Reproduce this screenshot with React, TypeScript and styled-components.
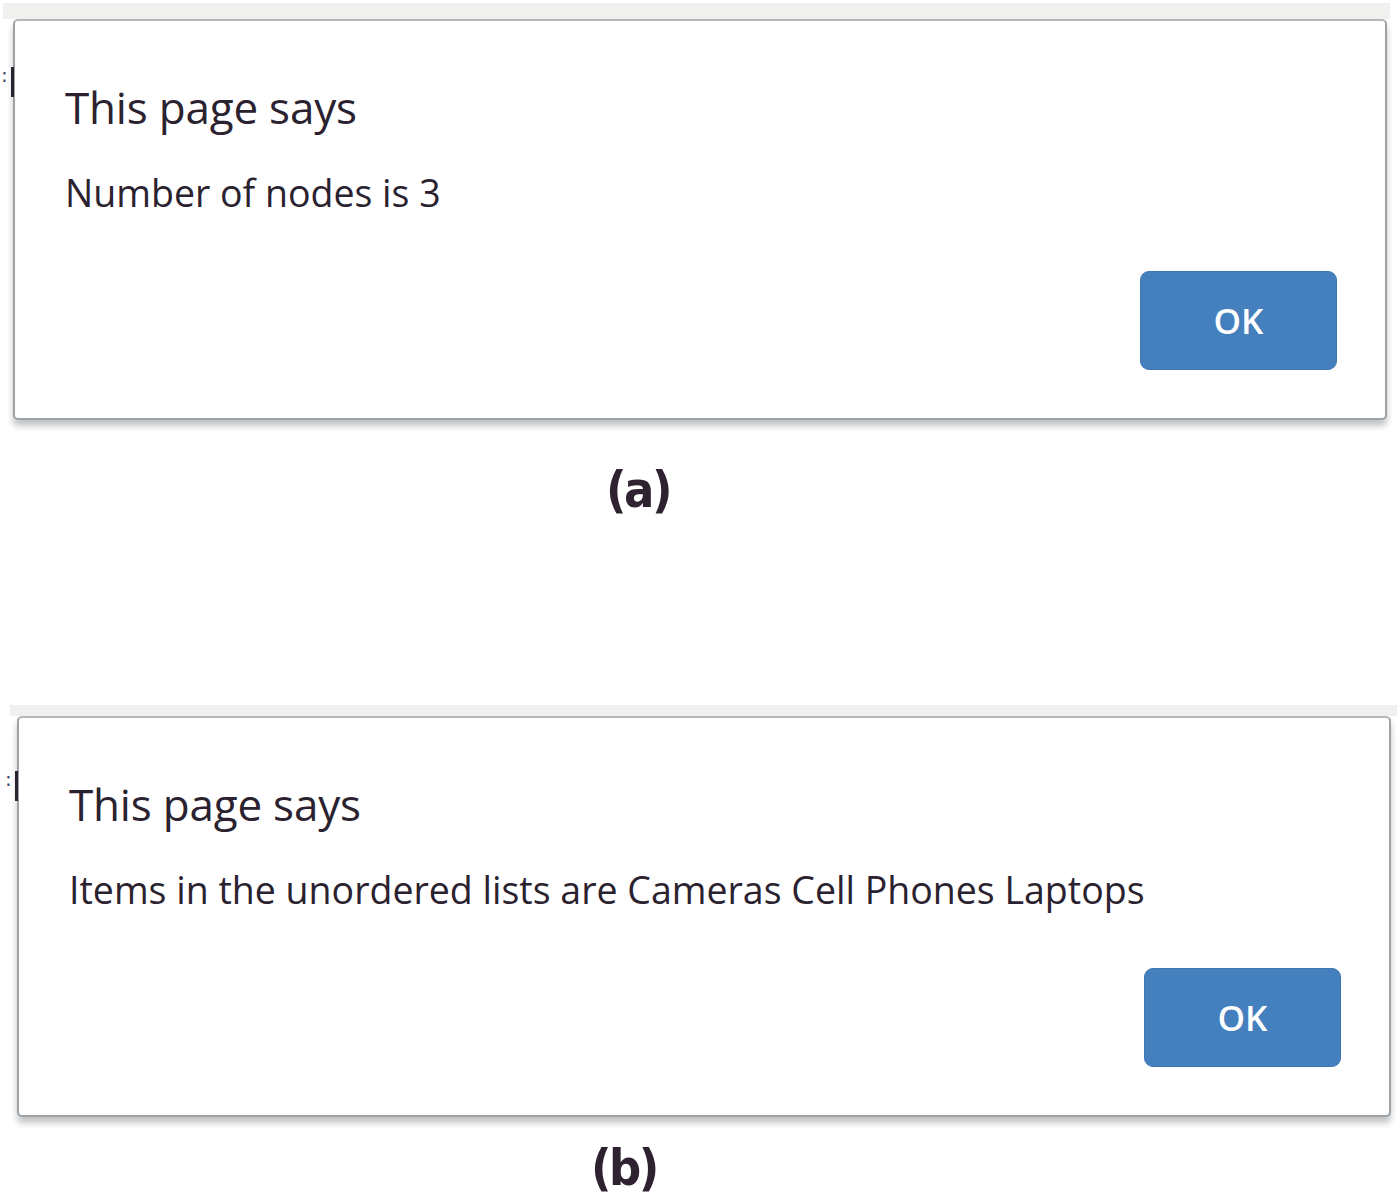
import { FC } from "react";
import styled, { createGlobalStyle } from "styled-components";

const GlobalStyle = createGlobalStyle`
  html, body {
    margin: 0;
    padding: 0;
    background: #ffffff;
  }
  body {
    font-family: "Open Sans", "Noto Sans", sans-serif;
    color: #2b2230;
  }
`;

const Page = styled.div({
  width: 1400,
  display: "flex",
  flexDirection: "column",
});

type IPanel = {
  top: number;
  left: number;
};

const Panel = styled.section<IPanel>(({ top, left }) => ({
  position: "relative",
  marginTop: top,
  paddingLeft: left,
  display: "flex",
  flexDirection: "column",
}));

const Strip = styled.div<{ h: number; offset: number }>(({ h, offset }) => ({
  height: h,
  marginLeft: offset,
  width: 1387,
  background: "#f0f1ef",
}));

const Dialog = styled.div({
  boxSizing: "border-box",
  width: 1374,
  height: 401,
  background: "#ffffff",
  border: "2px solid #9fa2a5",
  borderTopColor: "#b5b8bb",
  borderRadius: 5,
  boxShadow: "0 6px 6px rgba(120, 124, 128, 0.45)",
  padding: "58px 48px 48px 50px",
  display: "flex",
  flexDirection: "column",
});

const Title = styled.h2({
  margin: 0,
  fontWeight: 400,
  fontSize: 44,
  lineHeight: "56px",
  letterSpacing: -0.2,
});

const Message = styled.p({
  margin: "33px 0 0",
  fontSize: 37.5,
  lineHeight: "50px",
  whiteSpace: "nowrap",
});

const Actions = styled.div({
  marginTop: "auto",
  display: "flex",
  justifyContent: "flex-end",
});

const OkButton = styled.button({
  width: 197,
  height: 99,
  border: "1px solid #3d77b3",
  borderRadius: 9,
  background: "#4480bd",
  color: "#ffffff",
  fontFamily: "\"Open Sans\", sans-serif",
  fontWeight: 600,
  fontSize: 35,
  cursor: "pointer",
});

const Caption = styled.div<{ shift: number; gap: number }>(({ shift, gap }) => ({
  marginTop: gap,
  paddingLeft: shift,
  fontFamily: "\"DejaVu Sans Condensed\", \"DejaVu Sans\", sans-serif",
  fontWeight: 700,
  fontSize: 50,
  lineHeight: "48px",
  letterSpacing: -2.5,
  color: "#2e2230",
}));

// little bits of the page behind the dialog that show at its edges
const EdgeMark = styled.div<{ y: number; x: number }>(({ y, x }) => ({
  position: "absolute",
  top: y,
  left: x,
  width: 3,
  height: 30,
  background: "#2b2230",
}));

const Dots = styled.span<{ y: number; x: number }>(({ y, x }) => ({
  position: "absolute",
  top: y,
  left: x,
  fontSize: 20,
  lineHeight: "20px",
  color: "#3d4a66",
  fontFamily: "\"DejaVu Sans\", sans-serif",
}));

type IAlert = {
  message: string;
};

const Alert: FC<IAlert> = ({ message }) => (
  <Dialog>
    <Title>This page says</Title>
    <Message>{message}</Message>
    <Actions>
      <OkButton>OK</OkButton>
    </Actions>
  </Dialog>
);

const App: FC = () => {
  return (
    <Page>
      <GlobalStyle />
      <Panel top={3} left={13}>
        <Strip h={16} offset={-10} />
        <Alert message="Number of nodes is 3" />
        <EdgeMark y={64} x={11} />
        <Dots y={62} x={1}>:</Dots>
        <Caption shift={593} gap={46}>(a)</Caption>
      </Panel>
      <Panel top={191} left={17}>
        <Strip h={11} offset={-7} />
        <Alert message="Items in the unordered lists are Cameras Cell Phones Laptops" />
        <EdgeMark y={66} x={15} />
        <Dots y={64} x={5}>:</Dots>
        <Caption shift={574} gap={27}>(b)</Caption>
      </Panel>
    </Page>
  );
};

export default App;
